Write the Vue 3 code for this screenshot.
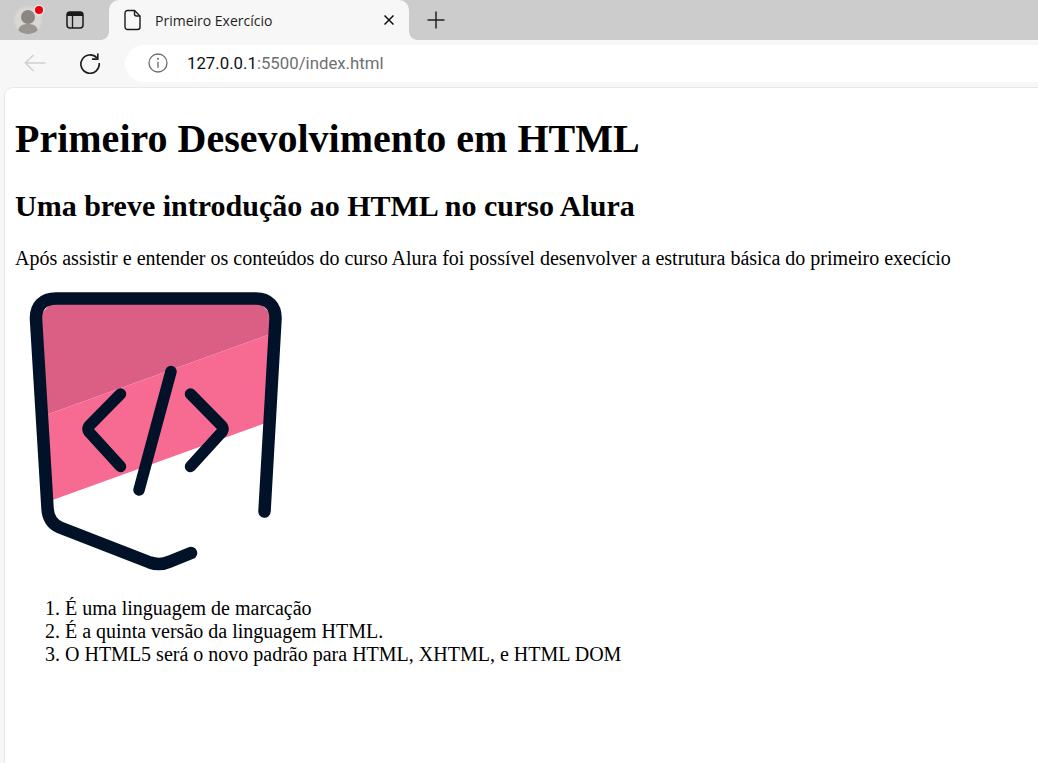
<template>
  <div class="window">
    <header class="tabstrip">
      <div class="avatar">
        <svg width="30" height="30" viewBox="0 0 30 30">
          <circle cx="14" cy="15" r="14" fill="#dad8d5" />
          <circle cx="14" cy="15" r="13.5" fill="none" stroke="#d2d0cc" />
          <circle cx="14" cy="12" r="7" fill="#8b8682" />
          <path d="M4.500 25.500c0-4.500 4.500-6.500 9.500-6.500s9.500 2 9.500 6.500c-2.500 2.300-5.800 3.500-9.500 3.500s-7-1.200-9.500-3.500z" fill="#9a9590" />
        </svg>
        <span class="dot"></span>
      </div>
      <button class="strip-btn">
        <svg width="20" height="20" viewBox="0 0 20 20">
          <rect x="2" y="2" width="16" height="16" rx="3" fill="none" stroke="#1a1a1a" stroke-width="1.500" />
          <path d="M2 6V5a3 3 0 0 1 3-3h10a3 3 0 0 1 3 3v1z" fill="#1a1a1a" />
          <path d="M7.500 6v12" stroke="#1a1a1a" stroke-width="1.300" />
        </svg>
      </button>
      <div class="tab">
        <svg class="doc" width="18" height="22" viewBox="0 0 18 22">
          <path d="M3.500 1.500h7l5.500 5.500v11a2.500 2.500 0 0 1-2.500 2.500h-10A2.500 2.500 0 0 1 1 18V4a2.500 2.500 0 0 1 2.500-2.500z" fill="none" stroke="#1a1a1a" stroke-width="1.400" />
          <path d="M10.500 1.500V5a2 2 0 0 0 2 2H16" fill="none" stroke="#1a1a1a" stroke-width="1.400" />
        </svg>
        <span class="tab-title">Primeiro Exercício</span>
        <svg class="close" width="12" height="12" viewBox="0 0 12 12">
          <path d="M1.500 1.500l9 9M10.500 1.500l-9 9" stroke="#111" stroke-width="1.500" />
        </svg>
      </div>
      <svg class="plus" width="20" height="20" viewBox="0 0 20 20">
        <path d="M10 1.500v17M1.500 10h17" stroke="#222" stroke-width="1.500" />
      </svg>
    </header>

    <nav class="toolbar">
      <svg class="back" width="24" height="20" viewBox="0 0 24 20">
        <path d="M22.500 10H2.500M10.500 2l-8 8 8 8" fill="none" stroke="#d0d0d0" stroke-width="1.600" />
      </svg>
      <svg class="reload" width="22" height="22" viewBox="0 0 24 24">
        <path d="M19.500 6.500A10 10 0 1 0 22 12" fill="none" stroke="#1c1c1c" stroke-width="1.800" />
        <path d="M20.500 1.500v6.300h-6.300" fill="none" stroke="#1c1c1c" stroke-width="1.800" />
      </svg>
      <div class="omnibox">
        <svg width="20" height="20" viewBox="0 0 20 20">
          <circle cx="10" cy="10" r="9" fill="none" stroke="#6e6e6e" stroke-width="1.300" />
          <path d="M10 8.700v6" stroke="#6e6e6e" stroke-width="1.400" />
          <circle cx="10" cy="5.800" r="1" fill="#6e6e6e" />
        </svg>
        <span class="url"><span class="host">127.0.0.1</span>:5500/index.html</span>
      </div>
    </nav>

    <main class="page">
      <h1>Primeiro Desevolvimento em HTML</h1>
      <h2>Uma breve introdução ao HTML no curso Alura</h2>
      <p>Após assistir e entender os conteúdos do curso Alura foi possível desenvolver a estrutura básica do primeiro execício</p>
      <svg class="logo" width="280" height="282" viewBox="15 290 280 282">
        <path d="M36 319L56 298.500H256L275.500 319L274.600 332.600L41.800 416.600z" fill="#db5f85" />
        <path d="M41.800 416.600L274.600 332.600L269.500 421.600L47 502z" fill="#f76a92" />
        <g fill="none" stroke="#011228" stroke-linecap="round" stroke-linejoin="round">
          <path d="M264.500 511.500L275.500 319C276 306 268 298.500 256 298.500H56C43 298.500 35.500 306 36 319L47.500 508C48 518 52 524 60 527.500L150 562.500Q160 566 170 561.500L191 553" stroke-width="12.500" />
          <path d="M120.500 394L90 425Q86 429 90 433L120.500 466.500M190.500 394L221 425Q225 429 221 433L190.500 466.500M171 371.500L139 490" stroke-width="11.500" />
        </g>
      </svg>
      <ol>
        <li>É uma linguagem de marcação</li>
        <li>É a quinta versão da linguagem HTML.</li>
        <li>O HTML5 será o novo padrão para HTML, XHTML, e HTML DOM</li>
      </ol>
    </main>
  </div>
</template>

<script setup>
</script>

<style>
html, body { margin: 0; overflow: hidden; }
</style>

<style scoped>
.window {
  height: 100vh;
  display: flex;
  flex-direction: column;
  background: #f7f7f7;
  overflow: hidden;
}
.tabstrip {
  height: 40px;
  flex: none;
  display: flex;
  align-items: center;
  background: #cccccc;
}
.avatar {
  position: relative;
  width: 30px;
  height: 30px;
  margin-left: 14px;
}
.avatar svg { display: block; }
.dot {
  position: absolute;
  left: 21px;
  top: 1px;
  width: 8px;
  height: 8px;
  border-radius: 50%;
  background: #e8000d;
  box-shadow: 0 0 0 1.500px #e6e6e6;
}
.strip-btn {
  width: 20px;
  height: 20px;
  padding: 0;
  margin-left: 21px;
  border: 0;
  background: none;
}
.strip-btn svg { display: block; }
.tab {
  position: relative;
  width: 300px;
  height: 40px;
  margin-left: 24px;
  display: flex;
  align-items: center;
  background: #f7f7f7;
  border-radius: 10px 10px 0 0;
}
.tab::before, .tab::after {
  content: "";
  position: absolute;
  bottom: 0;
  width: 8px;
  height: 8px;
  background: radial-gradient(circle at 0 0, #cccccc 7.500px, #f7f7f7 8px);
}
.tab::before { left: -8px; }
.tab::after {
  right: -8px;
  background: radial-gradient(circle at 100% 0, #cccccc 7.500px, #f7f7f7 8px);
}
.doc { margin-left: 15px; }
.tab-title {
  margin-left: 13px;
  font: 14px "Open Sans", "Noto Sans", sans-serif;
  color: #1f1f1f;
  white-space: nowrap;
}
.close { margin-left: auto; margin-right: 14px; }
.plus { margin-left: 17px; }
.toolbar {
  height: 48px;
  flex: none;
  box-sizing: border-box;
  padding-bottom: 2px;
  display: flex;
  align-items: center;
  background: #f7f7f7;
}
.back { margin-left: 23px; }
.reload { margin-left: 32px; }
.omnibox {
  flex: 1;
  height: 37px;
  margin-left: 24px;
  margin-right: -20px;
  padding-left: 23px;
  display: flex;
  align-items: center;
  background: #ffffff;
  border-radius: 19px;
}
.url {
  margin-left: 19px;
  font: 16.800px Roboto, "Open Sans", sans-serif;
  color: #6f6f6f;
  white-space: nowrap;
}
.host { color: #111; }
.page {
  flex: 1;
  min-height: 0;
  margin-left: 5px;
  padding: 0 10px;
  background: #ffffff;
  border-radius: 8px 0 0 0;
  box-shadow: 0 0 0 1px #e9e9e9;
  font: 20px/23px "Liberation Serif", "Times New Roman", serif;
  color: #000;
  display: flow-root;
}
h1 {
  font-size: 40px;
  line-height: 46px;
  font-weight: 700;
  margin: 28px 0 27px;
}
h2 {
  font-size: 30px;
  line-height: 34px;
  font-weight: 700;
  margin: 25px 0 24px;
}
p { margin: 20px 0; }
.logo { display: block; }
ol {
  margin: 25px 0 20px;
  padding-left: 50px;
}
</style>
